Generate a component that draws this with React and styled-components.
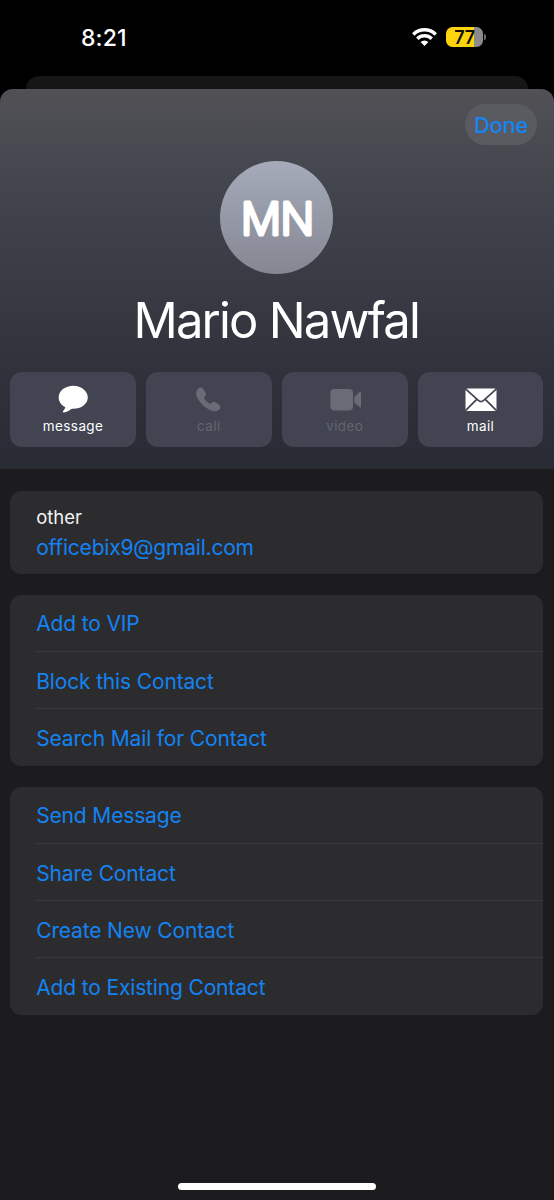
import React from 'react';
import styled, { createGlobalStyle } from 'styled-components';

const GlobalStyle = createGlobalStyle`
  * {
    box-sizing: border-box;
  }
  body {
    margin: 0;
    background-color: #000000;
    font-family: Inter, 'Liberation Sans', sans-serif;
  }
  button {
    font-family: inherit;
    border: none;
    cursor: pointer;
  }
`;

const Screen = styled.div`
  position: relative;
  display: flex;
  flex-direction: column;
  width: 554px;
  height: 1200px;
  overflow: hidden;
  background-color: #000000;
`;

const StatusBar = styled.div`
  display: flex;
  justify-content: space-between;
  align-items: center;
  height: 76px;
  padding: 0 68px 2px 81px;
`;

const Time = styled.div`
  padding-top: 2px;
  color: #ffffff;
  font-size: 23px;
  font-weight: 500;
  letter-spacing: 0.1px;
`;

const StatusIcons = styled.div`
  display: flex;
  align-items: center;
  gap: 9px;
  svg {
    display: block;
  }
`;

const Battery = styled.div`
  display: flex;
  align-items: center;
  gap: 1px;
`;

const BatteryBody = styled.div`
  display: flex;
  justify-content: center;
  align-items: center;
  width: 37px;
  height: 20px;
  border-radius: 6.5px;
  color: #140f00;
  background: linear-gradient(to right, #fbd40d 77%, #8b8b8d 77%);
  font-size: 18px;
  font-weight: 600;
  letter-spacing: -0.3px;
`;

const BatteryNub = styled.div`
  width: 2px;
  height: 6px;
  border-radius: 0 2px 2px 0;
  background-color: #6c6c6e;
`;

const BackSheet = styled.div`
  flex: none;
  height: 13px;
  margin: 0 26px;
  border-radius: 13px 13px 0 0;
  background-color: #161617;
`;

const Sheet = styled.div`
  flex: 1;
  border-radius: 13px 13px 0 0;
  overflow: hidden;
  background-color: #1c1c1e;
`;

const Hero = styled.div`
  display: flex;
  flex-direction: column;
  align-items: center;
  height: 380px;
  padding: 15px 10.6px 0 10.2px;
  background: linear-gradient(
    #515155 0%,
    #45474f 22%,
    #383a44 52%,
    #2f313b 75%,
    #282b34 100%
  );
`;

const DoneButton = styled.button`
  align-self: flex-end;
  width: 72px;
  height: 41px;
  margin-right: 6.4px;
  padding: 0;
  border-radius: 21px;
  color: #1585f4;
  background-color: #5a5b60;
  font-size: 22px;
  font-weight: 500;
  letter-spacing: -0.3px;
`;

const Avatar = styled.div`
  width: 113px;
  height: 113px;
  margin-top: 16px;
  border-radius: 50%;
  background: linear-gradient(#a5abba, #858792);
  svg {
    display: block;
  }
`;

const Initials = styled.text`
  fill: #ffffff;
  stroke: #ffffff;
  stroke-width: 3px;
  stroke-linejoin: round;
  font-size: 45px;
  font-weight: 300;
  letter-spacing: -1.2px;
  text-anchor: middle;
`;

const Name = styled.h1`
  margin: 16px 0 0;
  color: #ffffff;
  font-size: 49px;
  font-weight: 400;
  line-height: 62px;
  letter-spacing: -1.8px;
  text-indent: -1px;
  white-space: nowrap;
`;

const Actions = styled.div`
  display: grid;
  grid-template-columns: repeat(4, 1fr);
  gap: 10px;
  width: 100%;
  margin-top: 20px;
`;

const ActionButton = styled.button`
  display: flex;
  flex-direction: column;
  align-items: center;
  height: 75px;
  padding: 11px 0 0;
  border-radius: 12px;
  color: ${({ disabled }) => (disabled ? '#6a6b76' : '#ffffff')};
  background-color: #424451;
  svg {
    display: block;
  }
  span {
    margin-top: 3px;
    color: ${({ disabled }) => (disabled ? '#636570' : '#ffffff')};
    font-size: 13.5px;
    line-height: 20px;
    letter-spacing: 0.4px;
  }
`;

const Content = styled.div`
  display: flex;
  flex-direction: column;
  gap: 21px;
  padding: 22px 10.6px 0 10.2px;
`;

const Card = styled.div`
  border-radius: 11px;
  overflow: hidden;
  background-color: #2c2c2e;
`;

const EmailCard = styled(Card)`
  height: 83px;
  padding: 13px 26px 0;
`;

const EmailLabel = styled.div`
  color: #f4f4f5;
  font-size: 18.5px;
  line-height: 26px;
`;

const Email = styled.div`
  margin-top: 3px;
  color: #1383f3;
  font-size: 21px;
  line-height: 30px;
  letter-spacing: -0.2px;
`;

const Row = styled.div`
  height: 57px;
  margin-left: 26px;
  border-bottom: 1px solid #39393b;
  color: #1383f3;
  font-size: 21px;
  line-height: 59px;
  letter-spacing: -0.15px;
  &:first-child {
    line-height: 58px;
  }
  &:last-child {
    border-bottom: none;
  }
`;

const HomeIndicator = styled.div`
  position: absolute;
  left: 178px;
  bottom: 10px;
  width: 198px;
  height: 7px;
  border-radius: 4px;
  background-color: #ffffff;
`;

function WifiIcon() {
  return (
    <svg width="25" height="18" viewBox="0 0 25 18" fill="none">
      <path
        d="M1.3 6.4a16.1 16.1 0 0 1 22.4 0"
        stroke="#fff"
        strokeWidth="3.5"
      />
      <path
        d="M5.3 10.7a10.4 10.4 0 0 1 14.4 0"
        stroke="#fff"
        strokeWidth="3.5"
      />
      <path d="M8.6 14.1a5.8 5.8 0 0 1 7.8 0L12.5 18Z" fill="#fff" />
    </svg>
  );
}

function MessageIcon() {
  return (
    <svg width="32" height="30" viewBox="0 0 32 30" fill="currentColor">
      <path d="M16.3 2.8C8.3 2.8 1.7 7.8 1.7 14.4c0 4.2 2.5 7.5 6.3 9.5.4.3.3.8 0 1.3-.5 1-1.2 1.9-1.9 2.8-.6.8-.1 1.5.8 1.4 2.6-.3 5.4-1.7 7.4-3.3.6-.4 1.1-.4 2-.4 8 0 14.5-5 14.5-11.3S24.3 2.8 16.3 2.8Z" />
    </svg>
  );
}

function PhoneIcon() {
  return (
    <svg width="32" height="30" viewBox="0 0 32 30" fill="currentColor">
      <path d="M5.3 5.6c1.7-1.6 3.6-1.3 4.8.4l2.3 3.3c1 1.5.8 2.7-.4 3.9l-.7.7c-.4.4-.4.9-.1 1.4 1.2 2 3.2 4 5.3 5.2.5.3 1 .3 1.4-.1l.7-.7c1.2-1.2 2.4-1.4 3.8-.4l3.4 2.3c1.8 1.2 2.1 3.1.6 4.6-2.4 2.6-5.7 2.7-9.3.9C11.7 24.5 7 19.8 4.4 14.7c-1.8-3.6-1.7-6.8.9-9.1Z" />
    </svg>
  );
}

function VideoIcon() {
  return (
    <svg width="32" height="30" viewBox="0 0 32 30" fill="currentColor">
      <rect x="1.4" y="6" width="22.6" height="21.4" rx="4" />
      <path d="m25.3 14 5.2-4.7c.9-.8 2-.4 2 .8v13.2c0 1.2-1.1 1.6-2 .8l-5.2-4.7Z" />
    </svg>
  );
}

function MailIcon() {
  return (
    <svg width="32" height="30" viewBox="0 0 32 30" fill="none">
      <rect x="0.5" y="5.5" width="31" height="22.5" rx="2" fill="currentColor" />
      <path
        d="m.8 6.2 12.5 11.2c1.9 1.7 3.5 1.7 5.4 0L31.2 6.2M1 27.2l10.7-10.9M31 27.2 20.3 16.3"
        stroke="#424451"
        strokeWidth="1.7"
      />
    </svg>
  );
}

const actions = [
  { label: 'message', Icon: MessageIcon },
  { label: 'call', Icon: PhoneIcon, disabled: true },
  { label: 'video', Icon: VideoIcon, disabled: true },
  { label: 'mail', Icon: MailIcon }
];

const mailRows = ['Add to VIP', 'Block this Contact', 'Search Mail for Contact'];

const contactRows = [
  'Send Message',
  'Share Contact',
  'Create New Contact',
  'Add to Existing Contact'
];

function ContactHeader() {
  return (
    <Hero>
      <DoneButton>Done</DoneButton>
      <Avatar>
        <svg width="113" height="113" viewBox="0 0 113 113">
          <Initials x="57" y="74.2">
            MN
          </Initials>
        </svg>
      </Avatar>
      <Name>Mario Nawfal</Name>
      <Actions>
        {actions.map(({ label, Icon, disabled }) => (
          <ActionButton key={label} disabled={disabled}>
            <Icon />
            <span>{label}</span>
          </ActionButton>
        ))}
      </Actions>
    </Hero>
  );
}

function App() {
  return (
    <Screen>
      <GlobalStyle />
      <StatusBar>
        <Time>8:21</Time>
        <StatusIcons>
          <WifiIcon />
          <Battery>
            <BatteryBody>77</BatteryBody>
            <BatteryNub />
          </Battery>
        </StatusIcons>
      </StatusBar>
      <BackSheet />
      <Sheet>
        <ContactHeader />
        <Content>
          <EmailCard>
            <EmailLabel>other</EmailLabel>
            <Email>officebix9@gmail.com</Email>
          </EmailCard>
          <Card>
            {mailRows.map((row) => (
              <Row key={row}>{row}</Row>
            ))}
          </Card>
          <Card>
            {contactRows.map((row) => (
              <Row key={row}>{row}</Row>
            ))}
          </Card>
        </Content>
      </Sheet>
      <HomeIndicator />
    </Screen>
  );
}

export default App;
